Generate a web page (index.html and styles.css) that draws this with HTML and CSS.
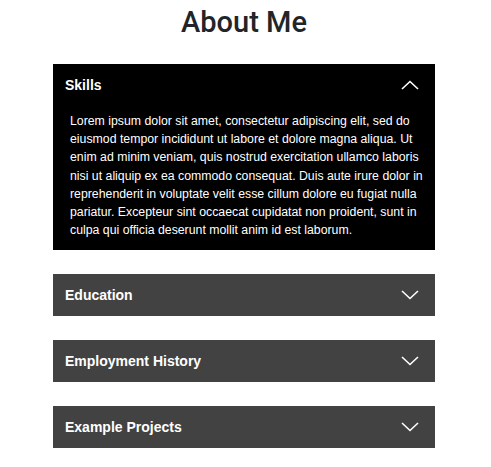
FILE: index.html
```html
<!DOCTYPE html>
<html>
<head>
<meta charset="utf-8">
<link rel="stylesheet" href="styles.css">
</head>
<body>
<main class="page">
  <h1 class="title">About Me</h1>
  <section class="acc open">
    <div class="acc-head">
      <span>Skills</span>
      <svg class="chev" width="18" height="10" viewBox="0 0 18 10"><path d="M1 9 L9 1.5 L17 9" fill="none" stroke="#fff" stroke-width="1.6"/></svg>
    </div>
    <div class="acc-body">Lorem ipsum dolor sit amet, consectetur adipiscing elit, sed do eiusmod tempor incididunt ut labore et dolore magna aliqua. Ut enim ad minim veniam, quis nostrud exercitation ullamco laboris nisi ut aliquip ex ea commodo consequat. Duis aute irure dolor in reprehenderit in voluptate velit esse cillum dolore eu fugiat nulla pariatur. Excepteur sint occaecat cupidatat non proident, sunt in culpa qui officia deserunt mollit anim id est laborum.</div>
  </section>
  <section class="acc">
    <div class="acc-head">
      <span>Education</span>
      <svg class="chev" width="18" height="10" viewBox="0 0 18 10"><path d="M1 1 L9 8.5 L17 1" fill="none" stroke="#fff" stroke-width="1.6"/></svg>
    </div>
  </section>
  <section class="acc">
    <div class="acc-head">
      <span>Employment History</span>
      <svg class="chev" width="18" height="10" viewBox="0 0 18 10"><path d="M1 1 L9 8.5 L17 1" fill="none" stroke="#fff" stroke-width="1.6"/></svg>
    </div>
  </section>
  <section class="acc">
    <div class="acc-head">
      <span>Example Projects</span>
      <svg class="chev" width="18" height="10" viewBox="0 0 18 10"><path d="M1 1 L9 8.5 L17 1" fill="none" stroke="#fff" stroke-width="1.6"/></svg>
    </div>
  </section>
</main>
</body>
</html>
```
FILE: styles.css
```css
html, body {
  margin: 0;
  padding: 0;
  background: #fff;
  font-family: "Liberation Sans", Arial, sans-serif;
}
.page {
  width: 382px;
  margin: 0 0 0 53px;
  padding-top: 4px;
  display: flex;
  flex-direction: column;
  gap: 24px;
}
.title {
  margin: 0;
  text-align: center;
  font-family: Roboto, "Liberation Sans", sans-serif;
  font-size: 29px;
  font-weight: 500;
  line-height: 36px;
  color: #212529;
}
.acc {
  background: #424242;
  color: #fff;
}
.acc.open {
  background: #000;
}
.acc-head {
  height: 42px;
  padding: 0 16px 0 12px;
  display: flex;
  align-items: center;
  justify-content: space-between;
  font-size: 14px;
  font-weight: 700;
}
.chev {
  display: block;
}
.acc-body {
  padding: 6px 10px 10.6px 17px;
  font-size: 12.3px;
  line-height: 18.2px;
}
```
